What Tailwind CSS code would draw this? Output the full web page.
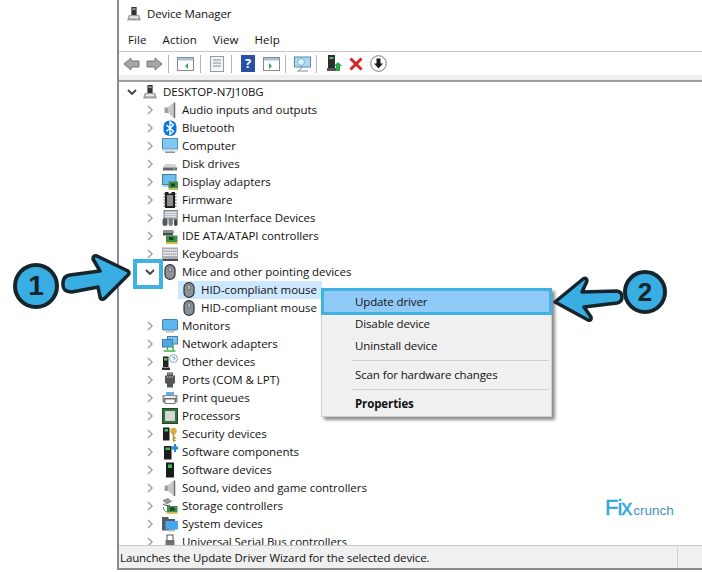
<!DOCTYPE html>
<html lang="en">
<head>
    <meta charset="UTF-8">
    <title>Device Manager</title>
    <script src="https://cdn.jsdelivr.net/npm/@tailwindcss/browser@4"></script>
</head>
<body class="bg-white">
    <svg width="0" height="0" class="absolute">
        <defs>
            <symbol id="pc" viewBox="0 0 16 16"><rect x="5" y="0" width="6" height="10" fill="#333"/><rect x="6" y="1.500" width="4" height="2" fill="#9a9a9a"/><path d="M2 9h12l2 6.500H0z" fill="#9f9f9f"/><rect x="3" y="10.500" width="10" height="2.500" fill="#e8e8e8"/></symbol>
            <symbol id="audio" viewBox="0 0 16 16"><path d="M2.500 5.500h3.500v5.500H2.500z" fill="#a0a0a0"/><path d="M6 5l6-4.500v15.500L6 11z" fill="#c8c8c8"/><path d="M12.500 0.500v15.500" stroke="#707070" stroke-width="1.500"/></symbol>
            <symbol id="bluetooth" viewBox="0 0 16 16"><rect x="1.500" y="0.500" width="13" height="15.500" rx="6" fill="#0a78d7"/><path d="M4.500 5l7 6.200-3.500 3.300V1.800L11.500 5l-7 6.200" fill="none" stroke="#fff" stroke-width="1.300"/></symbol>
            <symbol id="computer" viewBox="0 0 16 16"><rect x="0.500" y="0.500" width="15" height="10.500" fill="#7fc8f0" stroke="#4a90c0"/><rect x="0" y="11.500" width="16" height="2" fill="#d8dee2"/><rect x="3" y="13.500" width="10" height="1.500" fill="#8c969c"/></symbol>
            <symbol id="disk" viewBox="0 0 16 16"><path d="M3 8h10l2 3.500H1z" fill="#d2d2d2"/><rect x="1" y="11.500" width="14" height="3" fill="#666"/><rect x="11" y="12.500" width="2.500" height="1" fill="#8fe08f"/></symbol>
            <symbol id="display" viewBox="0 0 16 16"><rect x="0.500" y="0.500" width="13.500" height="10" fill="#6fbdec" stroke="#3d7fb0"/><rect x="1" y="11" width="12" height="2" fill="#c5ccd2"/><rect x="6.500" y="7.500" width="9.500" height="7" fill="#3f8f4a"/><rect x="9" y="9.500" width="4" height="3" fill="#1d3f22"/><rect x="6.500" y="14.500" width="9.500" height="1.500" fill="#d9b84a"/></symbol>
            <symbol id="firmware" viewBox="0 0 16 16"><path d="M3 0h3.500v1.500h3V0H13v16H3z" fill="#1e1e1e"/><rect x="5" y="3" width="6" height="11" fill="#8e8e8e"/><path d="M1.500 2h2M1.500 5h2M1.500 8h2M1.500 11h2M1.500 14h2M12.500 2h2M12.500 5h2M12.500 8h2M12.500 11h2M12.500 14h2" stroke="#444"/></symbol>
            <symbol id="hid" viewBox="0 0 16 16"><rect x="2" y="0.500" width="14" height="8.500" fill="#b8c0c8" stroke="#6a7480" stroke-width="0.800"/><path d="M3.500 2.500h11M3.500 4.500h11M3.500 6.500h11" stroke="#eef2f6" stroke-dasharray="1.500 .7"/><rect x="0.500" y="8" width="5" height="8" rx="2.500" fill="#555b63"/><rect x="6.500" y="8" width="4.500" height="8" rx="2.200" fill="#7a8088"/><rect x="12" y="9" width="3.500" height="7" rx="1.700" fill="#444"/></symbol>
            <symbol id="ide" viewBox="0 0 16 16"><path d="M1 2h10l1.500 3H1z" fill="#8a9096"/><rect x="1" y="5" width="10" height="2.500" fill="#4c4c4c"/><rect x="4" y="7.500" width="11.500" height="6.500" fill="#3f8f4a"/><rect x="7" y="9" width="4.500" height="3" fill="#1d3f22"/><rect x="4" y="14" width="11.500" height="2" fill="#d9b84a"/></symbol>
            <symbol id="keyboard" viewBox="0 0 16 16"><rect x="0" y="1.500" width="16" height="11.500" fill="#a8aeb4"/><path d="M1 4h14M1 6.700h14M1 9.400h14" stroke="#f4f4f4" stroke-width="1.400" stroke-dasharray="1.700 .4"/><rect x="0" y="13" width="16" height="2" fill="#4f4f4f"/></symbol>
            <symbol id="mouse" viewBox="0 0 16 16"><rect x="3" y="0.600" width="10" height="14.800" rx="5" fill="#8d9299" stroke="#2f3338" stroke-width="1.200"/><rect x="7" y="2.800" width="2" height="5" rx="1" fill="#f4f4f4" stroke="#2f3338" stroke-width="0.600"/></symbol>
            <symbol id="monitor" viewBox="0 0 16 16"><rect x="0.500" y="1.500" width="15" height="10.500" rx="1" fill="#5fb6ee" stroke="#3d7fb0"/><rect x="4" y="12.500" width="8" height="2" fill="#b4c0c8"/></symbol>
            <symbol id="network" viewBox="0 0 16 16"><rect x="5.500" y="0.500" width="10" height="7.500" fill="#78c0ee" stroke="#3d7fb0"/><rect x="0.500" y="3.500" width="10" height="7.500" fill="#4fa8e4" stroke="#3d7fb0"/><path d="M5.500 11v3M1.500 15h12M11 8v6" stroke="#46b04a" stroke-width="1.500"/></symbol>
            <symbol id="other" viewBox="0 0 16 16"><path d="M1 2.500h5.500V13H1z" fill="#222"/><rect x="2" y="4" width="3.500" height="2.500" fill="#3fbf5a"/><path d="M0 13.500h8V16H0z" fill="#2c2c2c"/><circle cx="11.500" cy="4.500" r="4" fill="#fff" stroke="#7aa6d8"/><path d="M10.200 3.500q1.300-1.400 2.500 0t-1.200 2.200" fill="none" stroke="#4a7fc0"/></symbol>
            <symbol id="ports" viewBox="0 0 16 16"><path d="M5 0.500h6v3h2v7.500l-2 1v3.500H5V12l-2-1V3.500h2z" fill="#555"/><path d="M6 2h4M5 5h6" stroke="#ddd" stroke-dasharray="1 .7"/></symbol>
            <symbol id="print" viewBox="0 0 16 16"><rect x="4" y="2" width="8" height="3.500" fill="#5fb0e8"/><path d="M0.500 5h15v7.500H.5z" fill="#8f8f8f"/><rect x="2.500" y="6" width="11" height="2" fill="#f0f0f0"/><rect x="3" y="9" width="10" height="4.500" fill="#fff" stroke="#3c3c3c" stroke-width="0.700"/></symbol>
            <symbol id="cpu" viewBox="0 0 16 16"><rect x="0.500" y="0.500" width="15" height="15" fill="#356f3c" stroke="#1f4a24"/><rect x="3" y="3" width="10" height="10" fill="#d4d6d6"/></symbol>
            <symbol id="security" viewBox="0 0 16 16"><rect x="1" y="1.500" width="6.500" height="13" fill="#1c1c1c"/><rect x="2.500" y="3" width="3.500" height="2.500" fill="#3fbf5a"/><circle cx="11.500" cy="5" r="3.200" fill="#e0ab3a"/><path d="M11.500 7v8.500M11.500 12h2.200M11.500 14.500h2.200" stroke="#c08a22" stroke-width="1.500"/></symbol>
            <symbol id="swcomp" viewBox="0 0 16 16"><rect x="2" y="2" width="7.500" height="13.500" fill="#1c1c1c"/><rect x="3.500" y="3.500" width="4.500" height="2.500" fill="#3fbf5a"/><path d="M9.500 2.500h2.500V0h2v2.500h2v3h-2V8h-2V5.500H9.500z" fill="#2b86d6"/></symbol>
            <symbol id="swdev" viewBox="0 0 16 16"><rect x="4" y="0.500" width="8" height="15" fill="#1c1c1c"/><rect x="6" y="2.500" width="4" height="3.500" fill="#3fbf5a"/></symbol>
            <symbol id="storage" viewBox="0 0 16 16"><path d="M1 2.500l5-2 3.500 3-5 2.500z" fill="#9a9a9a" stroke="#555" stroke-width="0.500"/><path d="M1 6c3 2 5 2 7 1" stroke="#444" fill="none"/><rect x="5" y="8" width="10.500" height="6" fill="#3f8f4a"/><rect x="8" y="9.500" width="4.500" height="3" fill="#1d3f22"/><rect x="5" y="14" width="10.500" height="1.800" fill="#d9b84a"/><path d="M1 9c1 3 2 5 4 5" stroke="#777" fill="none"/></symbol>
            <symbol id="system" viewBox="0 0 16 16"><path d="M0 1h6l1 2h6v11.500H0z" fill="#555b61"/><rect x="3.500" y="5" width="12.500" height="8.500" fill="#45a8ec"/><rect x="7" y="13.500" width="6" height="2" fill="#b4c0c8"/></symbol>
            <symbol id="usb" viewBox="0 0 16 16"><rect x="5" y="1" width="6" height="6" fill="#fff" stroke="#555"/><rect x="3.500" y="6" width="9" height="9" rx="1" fill="#707070"/></symbol>
        </defs>
    </svg>

    <div class="relative w-[702px] h-[572px] overflow-hidden font-['Open_Sans','Noto_Sans',sans-serif] text-[11.5px] tracking-[-0.12px] text-[#111]">
        <!-- Device Manager window -->
        <div class="ml-[117px] h-[570px] flex flex-col border-l-2 border-[#8c8c8c] bg-white">
            <div class="h-[28px] flex items-center pl-[8px] gap-[6px] shrink-0">
                <svg class="w-[14px] h-[14px]"><use href="#pc"/></svg>
                <span>Device Manager</span>
            </div>
            <div class="h-[24px] flex items-center pl-[9px] gap-[16px] tracking-[0.1px] border-b border-[#c8c8c8] shrink-0">
                <span>File</span><span>Action</span><span>View</span><span>Help</span>
            </div>
            <div class="h-[23px] flex items-center pl-[4px] shrink-0">
                <svg class="w-[17px] h-[14px]" viewBox="0 0 17 14"><path d="M1 7l7-6v3h8v6H8v3z" fill="#a3a7aa" stroke="#777"/></svg>
                <svg class="w-[17px] h-[14px] ml-[6px]" viewBox="0 0 17 14"><path d="M16 7L9 1v3H1v6h8v3z" fill="#a3a7aa" stroke="#777"/></svg>
                <div class="w-px h-[18px] bg-[#b5b5b5] ml-[5px]"></div>
                <svg class="w-[17px] h-[14px] ml-[8px]" viewBox="0 0 17 14"><rect x=".5" y=".5" width="16" height="13" fill="#fff" stroke="#8a8a8a"/><rect x="1" y="1" width="15" height="2.500" fill="#a8c4d8"/><path d="M11 6v6l-3-3z" fill="#3fa34d"/></svg>
                <div class="w-px h-[18px] bg-[#b5b5b5] ml-[6px]"></div>
                <svg class="w-[16px] h-[16px] ml-[8px]" viewBox="0 0 16 16"><rect x="1.500" y=".5" width="13" height="15" fill="#f4f4f4" stroke="#8aa0b0"/><path d="M4 4h8M4 7h8M4 10h8" stroke="#8a8a8a"/></svg>
                <div class="w-px h-[18px] bg-[#b5b5b5] ml-[6px]"></div>
                <div class="w-[14px] h-[17px] ml-[9px] bg-[#2b4fa8] text-white font-bold text-[13px] leading-[17px] text-center">?</div>
                <svg class="w-[17px] h-[14px] ml-[8px]" viewBox="0 0 17 14"><rect x=".5" y=".5" width="16" height="13" fill="#fff" stroke="#8a8a8a"/><rect x="1" y="1" width="15" height="2.500" fill="#a8c4d8"/><path d="M6 6v6l3-3z" fill="#3fa34d"/></svg>
                <div class="w-px h-[18px] bg-[#b5b5b5] ml-[5px]"></div>
                <svg class="w-[17px] h-[16px] ml-[8px]" viewBox="0 0 17 16"><rect x=".5" y="1" width="16" height="10" fill="#a9dcf5" stroke="#5a8aa8"/><circle cx="7" cy="6" r="3.500" fill="#d8f1fc" stroke="#7fb2d0"/><path d="M8 11l-3 4M3 15h11" stroke="#7a8a94"/></svg>
                <div class="w-px h-[18px] bg-[#b5b5b5] ml-[5px]"></div>
                <svg class="w-[15px] h-[17px] ml-[10px]" viewBox="0 0 15 17"><rect x="1" y="0" width="7" height="13" fill="#2d2d2d"/><rect x="2.500" y="2" width="4" height="2" fill="#49c060"/><rect x="0" y="13" width="9" height="3" fill="#555"/><path d="M11 7l4 4h-2v5H9v-5H7z" fill="#2aa84a"/></svg>
                <svg class="w-[14px] h-[14px] ml-[7px]" viewBox="0 0 14 14"><path d="M1.500 1.500l11 11M12.500 1.500l-11 11" stroke="#d8232a" stroke-width="3"/></svg>
                <svg class="w-[17px] h-[17px] ml-[7px]" viewBox="0 0 17 17"><circle cx="8.500" cy="8.500" r="7.800" fill="#fff" stroke="#777"/><path d="M6.500 3.500h4v5h2.500l-4.500 5-4.500-5h2.500z" fill="#1a1a1a"/></svg>
            </div>
            <div class="h-[7px] bg-[#f0f0f0] border-b-2 border-[#a0a0a0] shrink-0"></div>

            <!-- Tree -->
            <div id="tree" class="flex-1 overflow-hidden pt-px tracking-[-0.04px]"></div>

            <!-- Status bar -->
            <div class="h-[25px] bg-[#f0f0f0] border-t border-[#c8c8c8] border-b-2 border-b-[#8c8c8c] flex items-center pl-[1px] pt-[2px] shrink-0">
                <span class="flex-1">Launches the Update Driver Wizard for the selected device.</span>
                <div class="w-px h-[21px] -mt-[2px] bg-[#cfcfcf] mr-[24px]"></div>
            </div>
        </div>

        <!-- Context menu -->
        <div class="absolute left-[321px] top-[288px] w-[231px] h-[129px] bg-[#f0f0f0] border border-[#cfcfcf] shadow-[3px_3px_3px_rgba(0,0,0,0.45)]">
            <div class="h-[27px] -mt-px -mx-px bg-[#91c9f7] border-[3px] border-[#3fb2e3] flex items-center pl-[31px] pt-[1px]">Update driver</div>
            <div class="h-[22px] -mt-[2px] flex items-center pl-[33px]">Disable device</div>
            <div class="h-[22px] flex items-center pl-[33px]">Uninstall device</div>
            <div class="h-px bg-[#d0d0d0] ml-[30px] mr-[2px] my-[3px]"></div>
            <div class="h-[22px] flex items-center pl-[33px]">Scan for hardware changes</div>
            <div class="h-px bg-[#d0d0d0] ml-[30px] mr-[2px] my-[3px]"></div>
            <div class="h-[22px] flex items-center pl-[33px] font-bold">Properties</div>
        </div>

        <!-- Annotations -->
        <div class="absolute left-[133px] top-[259px] w-[30px] h-[30px] border-[4px] border-[#3fb2e3]"></div>
        <svg class="absolute left-0 top-[245px] w-[140px] h-[70px]" viewBox="0 0 140 70">
            <path d="M70 30L100 26L93 14Q93 10 97 11L128 26Q130 28 128 30L105 53Q101 56 100 52L98 42L72 47Q62 47 63 38Q63 31 70 30Z" fill="#38aee2" stroke="#16242c" stroke-width="3.500" stroke-linejoin="round"/>
        </svg>
        <div class="absolute left-[13px] top-[263px] w-[46px] h-[46px] rounded-full bg-[#38aee2] border-[4px] border-[#16242c] flex items-center justify-center font-['Liberation_Sans',sans-serif] font-bold text-[28px] text-[#16242c]">1</div>
        <svg class="absolute left-[550px] top-[270px] w-[80px] h-[60px]" viewBox="0 0 80 60">
            <path d="M5 32L33 9Q37 7 37 11L32 22L67 21Q72 22 72 27Q72 32 67 33L34 37L41 47Q42 51 38 50Z" fill="#38aee2" stroke="#16242c" stroke-width="3.500" stroke-linejoin="round"/>
        </svg>
        <div class="absolute left-[623px] top-[270px] w-[44px] h-[44px] rounded-full bg-[#38aee2] border-[4px] border-[#16242c] flex items-center justify-center font-['Liberation_Sans',sans-serif] font-bold text-[26px] text-[#16242c]">2</div>

        <!-- Watermark -->
        <div class="absolute left-[605px] top-[491px] flex items-baseline font-['Liberation_Sans',sans-serif]">
            <span class="text-[22px] text-[#2ea8e0] tracking-[-1px] [-webkit-text-stroke:0.4px_#2ea8e0]">Fix</span>
            <span class="text-[13.500px] text-[#3d92bd] tracking-[0px] ml-[2px]">crunch</span>
        </div>
    </div>

    <script>
        const devices = [
            ['Audio inputs and outputs', 'audio'], ['Bluetooth', 'bluetooth'], ['Computer', 'computer'],
            ['Disk drives', 'disk'], ['Display adapters', 'display'], ['Firmware', 'firmware'],
            ['Human Interface Devices', 'hid'], ['IDE ATA/ATAPI controllers', 'ide'], ['Keyboards', 'keyboard'],
            ['Mice and other pointing devices', 'mouse', 'open'],
            ['HID-compliant mouse', 'mouse', 'child selected'], ['HID-compliant mouse', 'mouse', 'child'],
            ['Monitors', 'monitor'], ['Network adapters', 'network'], ['Other devices', 'other'],
            ['Ports (COM & LPT)', 'ports'], ['Print queues', 'print'], ['Processors', 'cpu'],
            ['Security devices', 'security'], ['Software components', 'swcomp'], ['Software devices', 'swdev'],
            ['Sound, video and game controllers', 'audio'], ['Storage controllers', 'storage'],
            ['System devices', 'system'], ['Universal Serial Bus controllers', 'usb']
        ];

        const closed = '<svg class="w-[8px] h-[10px] shrink-0" viewBox="0 0 8 10"><path d="M2 1l4 4-4 4" fill="none" stroke="#a6a6a6" stroke-width="1.500"/></svg>';
        const opened = '<svg class="w-[10px] h-[8px] shrink-0" viewBox="0 0 10 8"><path d="M1 2l4 4 4-4" fill="none" stroke="#404040" stroke-width="1.800"/></svg>';
        const icon = (name, size) => `<svg class="${size} shrink-0"><use href="#${name}"/></svg>`;

        function createTree() {
            let html = `<div class="h-[18px] flex items-center pl-[8px]">${opened}<span class="ml-[6px]">${icon('pc', 'w-[14px] h-[14px]')}</span><span class="ml-[6px]">DESKTOP-N7J10BG</span></div>`;
            devices.forEach(([label, name, state = '']) => {
                if (state.includes('child')) {
                    const bg = state.includes('selected') ? 'bg-[#cde8ff]' : '';
                    html += `<div class="h-[18px] flex items-center ml-[59px] w-[144px] pl-[3px] ${bg}">${icon(name, 'w-[16px] h-[16px]')}<span class="ml-[4px] whitespace-nowrap">${label}</span></div>`;
                } else {
                    const arrow = state === 'open' ? `<span class="-ml-px">${opened}</span>` : closed;
                    html += `<div class="h-[18px] flex items-center pl-[27px]"><span class="w-[16px] flex">${arrow}</span>${icon(name, 'w-[16px] h-[16px]')}<span class="ml-[4px] whitespace-nowrap">${label.replace('&', '&amp;')}</span></div>`;
                }
            });
            document.getElementById('tree').innerHTML = html;
        }

        createTree();
    </script>
</body>
</html>
